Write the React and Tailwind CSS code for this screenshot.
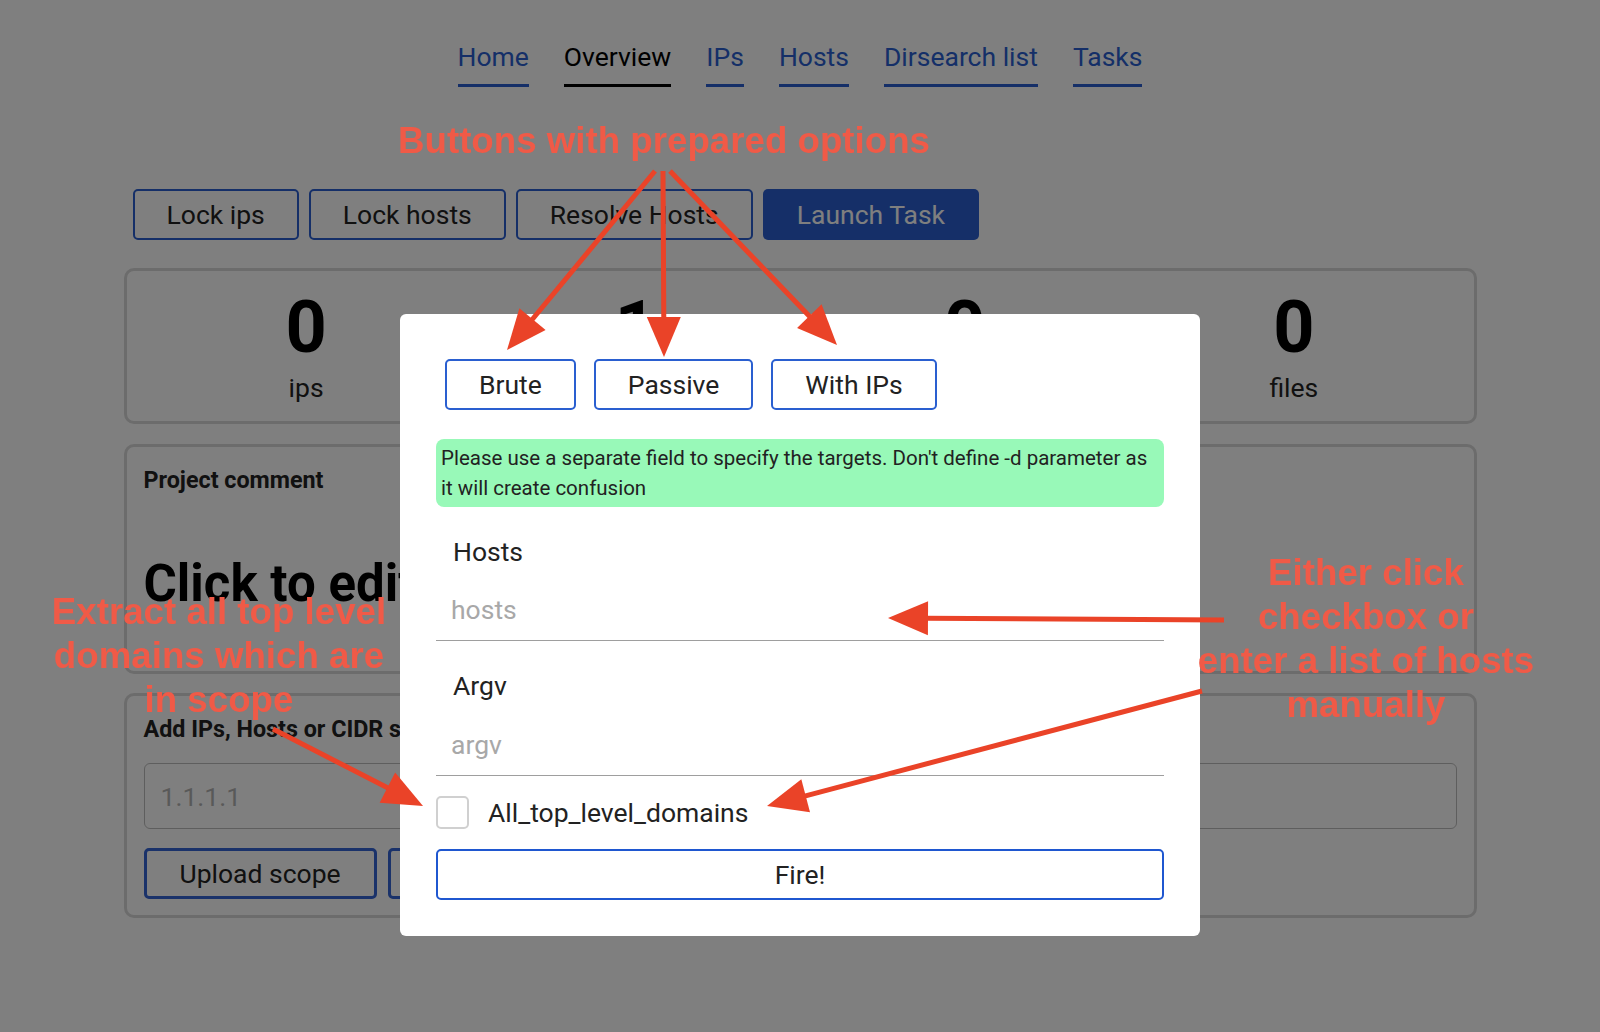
import React from "react";

const navItems = [
  { label: "Home" },
  { label: "Overview", active: true },
  { label: "IPs" },
  { label: "Hosts" },
  { label: "Dirsearch list" },
  { label: "Tasks" },
];

const stats = [
  { value: "0", label: "ips" },
  { value: "1", label: "hosts" },
  { value: "0", label: "services" },
  { value: "0", label: "files" },
];

// annotation arrows: tail x,y -> tip x,y
const arrows = [
  [655, 171, 507, 350],
  [663, 171, 664, 357],
  [670, 171, 837, 345],
  [1224, 620, 888, 618],
  [1202, 691, 767, 806],
  [273, 729, 423, 806],
];

function Arrow({ from }) {
  const [x1, y1, x2, y2] = from;
  const dx = x2 - x1;
  const dy = y2 - y1;
  const len = Math.hypot(dx, dy);
  const ux = dx / len;
  const uy = dy / len;
  const hl = 40;
  const hw = 17;
  const bx = x2 - ux * hl;
  const by = y2 - uy * hl;
  const points = `${x2},${y2} ${bx - uy * hw},${by + ux * hw} ${bx + uy * hw},${by - ux * hw}`;
  return (
    <g>
      <line x1={x1} y1={y1} x2={bx + ux * 4} y2={by + uy * 4} stroke="#ea4328" strokeWidth="5" />
      <polygon points={points} fill="#ea4328" />
    </g>
  );
}

const OutlineButton = ({ children, className = "" }) => (
  <button
    className={
      "h-[51px] px-[32px] rounded-[5px] border-2 border-[#2a5fd0] bg-white text-[26.5px] leading-[30px] text-[#222] " +
      className
    }
  >
    {children}
  </button>
);

const App = () => {
  return (
    <div className="relative min-h-screen overflow-hidden bg-white font-['Roboto',sans-serif] text-[#222]">
      <nav className="flex justify-center gap-[35px] pt-[42px]">
        {navItems.map((item) => (
          <a
            key={item.label}
            className={
              item.active
                ? "border-b-[3px] border-black pb-[12px] text-[26.5px] leading-[30px] text-black"
                : "border-b-[3px] border-[#2a5fd0] pb-[12px] text-[26.5px] leading-[30px] text-[#2a5fd0]"
            }
          >
            {item.label}
          </a>
        ))}
      </nav>

      <div className="mx-auto w-[1353px]">
        <div className="mt-[102px] flex gap-[10px] pl-[9px]">
          <OutlineButton>Lock ips</OutlineButton>
          <OutlineButton>Lock hosts</OutlineButton>
          <OutlineButton>Resolve Hosts</OutlineButton>
          <button className="h-[51px] px-[34px] rounded-[5px] bg-[#2a5fd0] text-[26.5px] leading-[30px] text-white">
            Launch Task
          </button>
        </div>

        <div className="mt-[28px] grid grid-cols-4 rounded-[10px] border-[3px] border-[#d9d9d9] px-[15px] pt-[21px] pb-[19px]">
          {stats.map((stat, i) => (
            <div key={i} className="flex flex-col items-center">
              <span className="text-[72px] font-bold leading-[72px] text-black">{stat.value}</span>
              <span className="mt-[10px] text-[26.5px] leading-[28px]">{stat.label}</span>
            </div>
          ))}
        </div>

        <div className="mt-[20px] h-[230px] rounded-[10px] border-[3px] border-[#d9d9d9] px-[17px] pt-[19px]">
          <h3 className="text-[23.3px] font-bold leading-[28px]">Project comment</h3>
          <p className="mt-[59px] text-[51px] font-bold leading-[62px] text-black">Click to edit</p>
        </div>

        <div className="mt-[19px] h-[225px] rounded-[10px] border-[3px] border-[#d9d9d9] px-[17px] pt-[19px]">
          <h3 className="text-[23.3px] font-bold leading-[28px]">Add IPs, Hosts or CIDR scope</h3>
          <input
            className="mt-[20px] h-[66px] w-full rounded-md border border-[#bdbdbd] px-4 text-[26.5px] placeholder:text-[#b3b3b3]"
            placeholder="1.1.1.1"
          />
          <div className="mt-[19px] flex gap-[11px]">
            <button className="h-[51px] px-[33px] rounded-[5px] border-[3px] border-[#3464d4] text-[26.5px] text-[#222]">
              Upload scope
            </button>
            <button className="h-[51px] px-[33px] rounded-[5px] border-[3px] border-[#3464d4] text-[26.5px] text-[#222]">
              Add to scope
            </button>
          </div>
        </div>
      </div>

      {/* dialog */}
      <div className="fixed inset-0 flex justify-center bg-black/50 pt-[314px]">
        <div className="h-[622px] w-[800px] rounded-[6px] bg-white p-[36px]">
          <div className="flex gap-[18px] pl-[9px] pt-[9px]">
            <OutlineButton className="border-[#1f57d0]">Brute</OutlineButton>
            <OutlineButton className="border-[#1f57d0]">Passive</OutlineButton>
            <OutlineButton className="border-[#1f57d0]">With IPs</OutlineButton>
          </div>

          <div className="mt-[29px] rounded-lg bg-[#98f9b8] px-[5px] py-[4px] text-[20.5px] leading-[30px] text-[#222]">
            Please use a separate field to specify the targets. Don't define -d parameter as
            <br />
            it will create confusion
          </div>

          <div className="mt-[31px]">
            <label className="block pl-[17px] text-[26.5px] leading-[28px]">Hosts</label>
            <input
              className="mt-[30px] block w-full border-b border-[#9e9e9e] pb-[16px] pl-[15px] text-[26.5px] leading-[28px] placeholder:text-[#a8a8a8]"
              placeholder="hosts"
            />
          </div>

          <div className="mt-[31px]">
            <label className="block pl-[17px] text-[26.5px] leading-[28px]">Argv</label>
            <input
              className="mt-[31px] block w-full border-b border-[#9e9e9e] pb-[16px] pl-[15px] text-[26.5px] leading-[28px] placeholder:text-[#a8a8a8]"
              placeholder="argv"
            />
          </div>

          <div className="mt-[20px] flex items-center gap-[19px]">
            <span className="h-[33px] w-[33px] rounded-[5px] border-2 border-[#d0d0d0]" />
            <span className="text-[26.5px] leading-[30px]">All_top_level_domains</span>
          </div>

          <button className="mt-[20px] h-[51px] w-full rounded-[5px] border-2 border-[#1f57d0] text-[26.5px] text-[#222]">
            Fire!
          </button>
        </div>
      </div>

      {/* annotations */}
      <div className="pointer-events-none absolute inset-0 font-['Liberation_Sans',Arial,sans-serif] text-[36.7px] font-bold leading-[44px] text-[#f05a47]">
        <svg className="absolute left-0 top-0" width="1600" height="1032">
          {arrows.map((a, i) => (
            <Arrow key={i} from={a} />
          ))}
        </svg>
        <div className="absolute left-[664px] top-[119px] -translate-x-1/2 whitespace-nowrap">
          Buttons with prepared options
        </div>
        <div className="absolute left-[219px] top-[590px] -translate-x-1/2 whitespace-nowrap text-center">
          Extract all top level
          <br />
          domains which are
          <br />
          in scope
        </div>
        <div className="absolute left-[1366px] top-[551px] -translate-x-1/2 whitespace-nowrap text-center">
          Either click
          <br />
          checkbox or
          <br />
          enter a list of hosts
          <br />
          manually
        </div>
      </div>
    </div>
  );
};

export default App;
